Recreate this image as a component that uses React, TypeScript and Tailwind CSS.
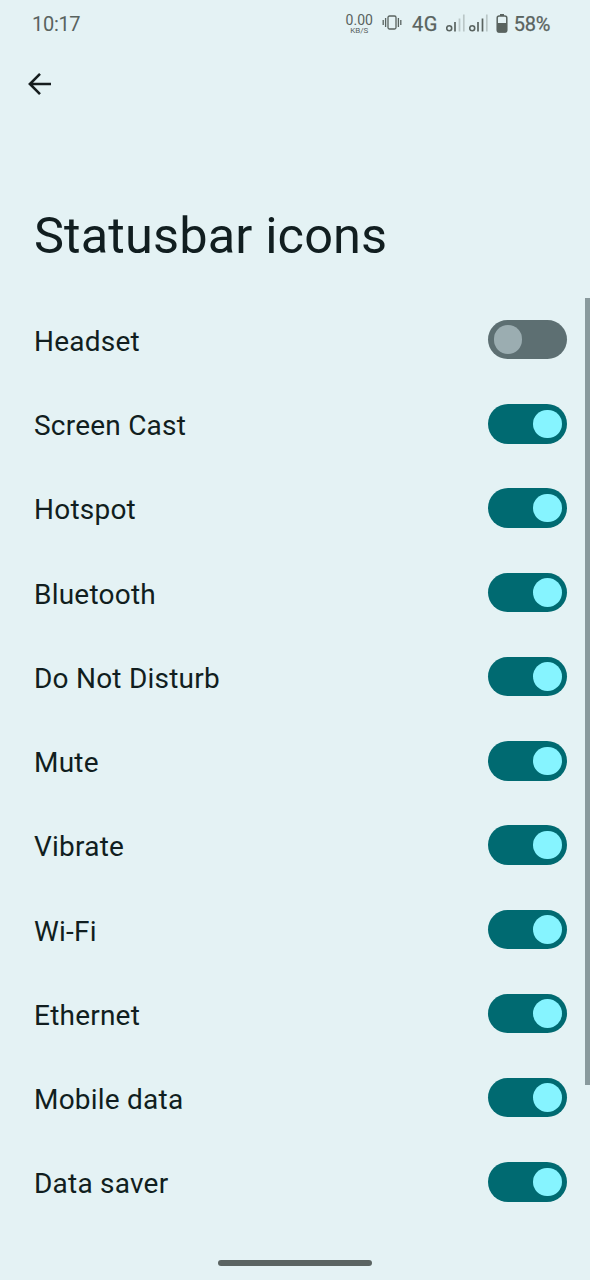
const items: { label: string; on: boolean }[] = [
  { label: 'Headset', on: false },
  { label: 'Screen Cast', on: true },
  { label: 'Hotspot', on: true },
  { label: 'Bluetooth', on: true },
  { label: 'Do Not Disturb', on: true },
  { label: 'Mute', on: true },
  { label: 'Vibrate', on: true },
  { label: 'Wi-Fi', on: true },
  { label: 'Ethernet', on: true },
  { label: 'Mobile data', on: true },
  { label: 'Data saver', on: true },
];

function Toggle({ on }: { on: boolean }) {
  return (
    <button
      role="switch"
      aria-checked={on}
      className={`flex h-[39.5px] w-[79px] items-center rounded-full px-[5.5px] ${
        on ? 'justify-end bg-[#006a71]' : 'justify-start bg-[#5d6f72]'
      }`}
    >
      <span className={`size-[28.5px] rounded-full ${on ? 'bg-[#86f4ff]' : 'bg-[#9badb1]'}`} />
    </button>
  );
}

function Signal({ strong }: { strong: boolean }) {
  return (
    <svg width="20" height="20" viewBox="0 0 20 20" fill="none" stroke="#59635f">
      <circle cx="3.2" cy="14.3" r="2.5" strokeWidth="1.6" />
      <path d="M9 17.500V8" strokeWidth="1.7" />
      <path d="M13.500 17.500V4.500" strokeWidth="1.7" opacity={strong ? 1 : 0.3} />
      <path d="M17.800 17.500V0.500" strokeWidth="1.7" opacity="0.3" />
    </svg>
  );
}

function StatusBar() {
  return (
    <header className="flex h-12 items-center pr-[40px] pl-[32px] text-xl text-[#59635f]">
      <span className="tracking-[-0.3px]">10:17</span>
      <div className="ml-auto flex items-center">
        <div className="flex flex-col items-center">
          <span className="text-[14px] leading-[14px]">0.00</span>
          <span className="text-[8px] leading-[8px]">KB/S</span>
        </div>
        <svg className="ml-[9px]" width="20" height="18" viewBox="0 0 20 18" fill="none" stroke="#59635f" strokeWidth="1.3">
          <rect x="6" y="1" width="8" height="13" rx="1.5" />
          <path d="M3.6 3V12M1.200 5V10M16.4 3V12M18.800 5V10" />
        </svg>
        <span className="ml-[10px] tracking-[0.5px] [-webkit-text-stroke:0.25px_#59635f]">4G</span>
        <div className="ml-[8px] flex gap-[3px]">
          <Signal strong={false} />
          <Signal strong />
        </div>
        <svg className="ml-[7px]" width="12" height="20" viewBox="0 0 12 20" fill="none">
          <rect x="4" y="0" width="4" height="2" fill="#59635f" />
          <rect x="1.2" y="2" width="9.6" height="16" rx="2" stroke="#59635f" strokeWidth="1.5" />
          <path d="M1 9h10v8q0 1.500-1.500 1.500h-7Q1 18.500 1 17z" fill="#59635f" />
        </svg>
        <span className="ml-[6px] tracking-[-0.3px] [-webkit-text-stroke:0.25px_#59635f]">58%</span>
      </div>
    </header>
  );
}

export default function App() {
  return (
    <div className="relative flex h-[1280px] w-[590px] flex-col overflow-hidden bg-[#e4f2f4] font-['Roboto',sans-serif] text-[#111e20]">
      <StatusBar />
      <nav className="flex h-[72px] items-center pl-[28px]">
        <button aria-label="Back">
          <svg width="24" height="24" viewBox="0 0 24 24" fill="none" stroke="#161d1e" strokeWidth="2.6">
            <path d="M23 12H3M12 1.800L1.900 12L12 22.200" />
          </svg>
        </button>
      </nav>
      <h1 className="flex h-[177.5px] items-end pb-[28px] pl-[34px] text-[50.5px] leading-[68px] tracking-[0.13px]">
        Statusbar icons
      </h1>
      <main>
        {items.map((item) => (
          <div key={item.label} className="flex h-[84.24px] items-center justify-between pr-[23px] pl-[34px]">
            <span className="pt-[4.5px] text-[28px] leading-9 tracking-[0.22px]">{item.label}</span>
            <Toggle on={item.on} />
          </div>
        ))}
      </main>
      <div className="absolute top-[298px] right-0 h-[787px] w-[5.5px] bg-[#899a9d]" />
      <div className="absolute bottom-[14px] left-[218px] h-[6px] w-[154px] rounded-full bg-[#5b6462]" />
    </div>
  );
}
